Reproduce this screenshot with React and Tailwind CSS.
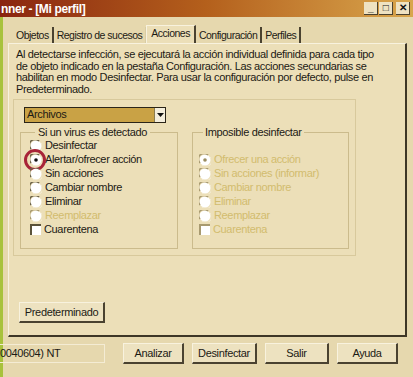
import React from 'react';

const font = { fontFamily: '"Liberation Sans", Arial, sans-serif' };

function Radio({ checked, disabled }) {
  const dark = disabled ? '#a89a70' : '#6b6248';
  return (
    <svg width="12" height="12" viewBox="0 0 12 12" className="shrink-0">
      <circle cx="6" cy="6" r="5.5" fill="#fff" />
      <path d="M1 9 A5.5 5.5 0 0 1 9 1" stroke={dark} strokeWidth="1.6" fill="none" />
      <path d="M3 11 A5.5 5.5 0 0 0 11 3" stroke="#f4ecd4" strokeWidth="1" fill="none" />
      {checked && <circle cx="6" cy="6" r="1.8" fill={disabled ? '#9a8c60' : '#111'} />}
    </svg>
  );
}

function Check({ disabled }) {
  return (
    <span
      className={`w-[11px] h-[11px] shrink-0 bg-white border-l-2 border-t-2 ${
        disabled ? 'border-[#a89a70]' : 'border-[#5a523a]'
      }`}
    />
  );
}

function Option({ label, checked, disabled, box, highlight }) {
  return (
    <div className="relative flex items-center gap-[3px] h-[14px]">
      {box ? <Check disabled={disabled} /> : <Radio checked={checked} disabled={disabled} />}
      <span className={disabled ? 'text-[#d2bc6e]' : 'text-[#1c1a14]'}>{label}</span>
      {highlight && (
        <span className="absolute left-[-6px] top-[-4px] w-[22px] h-[22px] rounded-full border-[3px] border-[#a82438]" />
      )}
    </div>
  );
}

function Button({ children, className = '' }) {
  return (
    <button
      className={`h-[21px] bg-[#ede2c0] border-t border-l border-[#f8f2de] border-r-2 border-b-2 border-r-[#4a4230] border-b-[#4a4230] text-[#1c1a14] ${className}`}
    >
      {children}
    </button>
  );
}

export default function App() {
  return (
    <div
      className="w-[413px] h-[377px] overflow-hidden flex flex-col bg-[#e6d8ae] text-[11px] tracking-[-0.35px] leading-none"
      style={font}
    >
      <div className="h-[17px] shrink-0 flex items-center justify-between bg-gradient-to-r from-[#8a2410] via-[#b4601c] to-[#d8a64c] pl-[1px] pr-[3px]">
        <span className="text-white font-bold text-[12px]">nner - [Mi perfil]</span>
        <div className="flex gap-[1px]">
          {['_', '□', '✕'].map((g, i) => (
            <span
              key={i}
              className={`w-[14px] h-[13px] bg-[#eee2c2] border-r border-b border-[#4a4230] flex items-center justify-center text-[#111] font-bold text-[10px] ${
                i === 2 ? 'ml-[2px]' : ''
              }`}
            >
              {g}
            </span>
          ))}
        </div>
      </div>

      <div className="flex-1 flex flex-col border-l-[3px] border-[#a8c23c]">
        <div className="flex items-end pl-[10px] pt-[8px] h-[26px] text-[#1c1a14] text-[10.5px] tracking-[-0.5px]">
          <span className="px-[3px] h-[16px] flex items-center border-r-2 border-[#4a4230]">Objetos</span>
          <span className="px-[3px] h-[16px] flex items-center border-r border-[#d8cca4]">Registro de sucesos</span>
          <span className="px-[4px] h-[19px] flex items-center bg-[#ecdfb8] border-t border-l border-[#f8f2de] border-r-2 border-r-[#4a4230] mb-[-1px] pb-[3px]">
            Acciones
          </span>
          <span className="px-[3px] h-[16px] flex items-center border-r-2 border-[#4a4230]">Configuración</span>
          <span className="px-[3px] h-[16px] flex items-center border-r-2 border-[#4a4230]">Perfiles</span>
        </div>

        <div className="ml-[5px] mr-[6px] h-[294px] bg-[#ecdfb8] border-t border-l border-[#f8f2de] border-r-2 border-b-2 border-r-[#3e3626] border-b-[#3e3626] flex flex-col">
          <p className="pl-[7px] pt-[5px] leading-[11.7px] whitespace-nowrap text-[#1c1a14]">
            Al detectarse infección, se ejecutará la acción individual definida para cada tipo
            <br />
            de objeto indicado en la pestaña Configuración. Las acciones secundarias se
            <br />
            habilitan en modo Desinfectar. Para usar la configuración por defecto, pulse en
            <br />
            Predeterminado.
          </p>

          <div className="ml-[4px] mt-[3px] w-[343px] h-[157px] border border-[#d8c99c] flex flex-col pl-[10px] pt-[7px]">
            <div className="w-[142px] h-[16px] flex border border-[#2a2418] bg-[#c9a245]">
              <span className="flex-1 pl-[2px] flex items-center text-[#1c1a14]">Archivos</span>
              <span className="w-[11px] bg-[#f4eedc] border-l border-[#8a7c50] flex items-center justify-center">
                <svg width="7" height="4" viewBox="0 0 7 4">
                  <path d="M0 0h7L3.5 4z" fill="#111" />
                </svg>
              </span>
            </div>

            <div className="flex gap-[14px] mt-[4px] ml-[-4px]">
              <fieldset className="w-[158px] h-[122px] border border-[#cbbb8c] pl-[9px] pt-[1px]">
                <legend className="ml-[5px] px-[3px] text-[#1c1a14]">Si un virus es detectado</legend>
                <div className="flex flex-col">
                  <Option label="Desinfectar" />
                  <Option label="Alertar/ofrecer acción" checked highlight />
                  <Option label="Sin acciones" />
                  <Option label="Cambiar nombre" />
                  <Option label="Eliminar" />
                  <Option label="Reemplazar" disabled />
                  <Option label="Cuarentena" box />
                </div>
              </fieldset>

              <fieldset className="w-[157px] h-[122px] border border-[#cbbb8c] pl-[6px] pt-[15px]">
                <legend className="ml-[4px] px-[2px] text-[#1c1a14]">Imposible desinfectar</legend>
                <div className="flex flex-col">
                  <Option label="Ofrecer una acción" checked disabled />
                  <Option label="Sin acciones (informar)" disabled />
                  <Option label="Cambiar nombre" disabled />
                  <Option label="Eliminar" disabled />
                  <Option label="Reemplazar" disabled />
                  <Option label="Cuarentena" disabled box />
                </div>
              </fieldset>
            </div>
          </div>

          <div className="mt-auto mb-[12px] ml-[10px]">
            <Button className="w-[86px]">Predeterminado</Button>
          </div>
        </div>

        <div className="flex items-center h-[33px]">
          <div className="w-[105px] h-[19px] flex items-center border-t border-r border-b border-[#f4ecd4] text-[#1c1a14] ml-[-3px]">
            0040604) NT
          </div>
          <div className="flex gap-[8px] ml-[18px]">
            <Button className="w-[61px]">Analizar</Button>
            <Button className="w-[65px]">Desinfectar</Button>
            <Button className="w-[64px]">Salir</Button>
            <Button className="w-[61px]">Ayuda</Button>
          </div>
        </div>
      </div>
    </div>
  );
}
